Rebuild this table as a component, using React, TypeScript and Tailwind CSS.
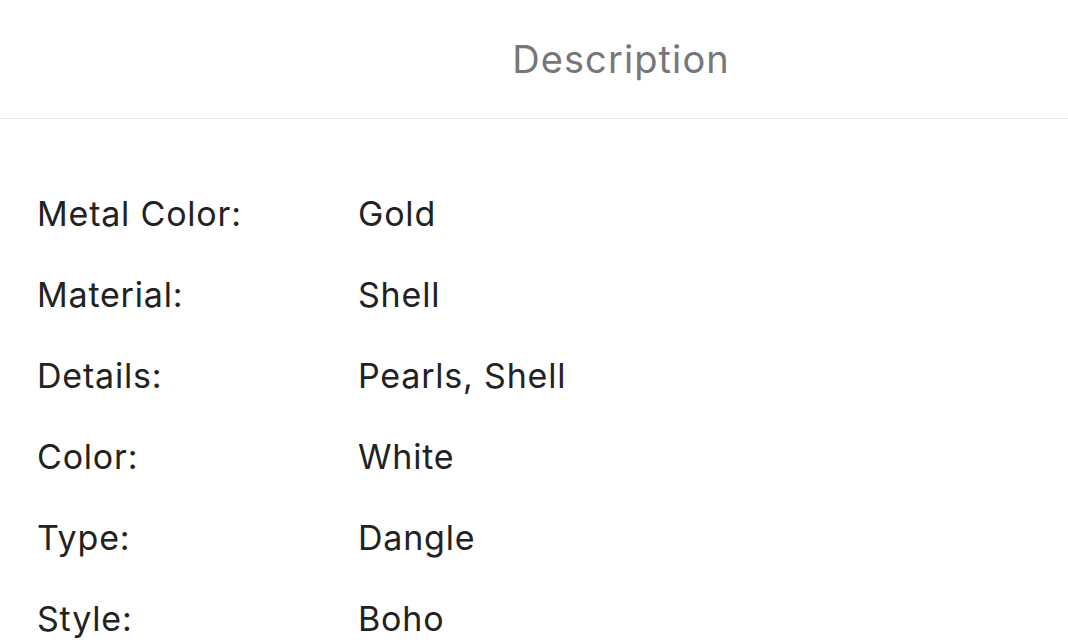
import React from 'react'

const specs: [string, string][] = [
  ['Metal Color:', 'Gold'],
  ['Material:', 'Shell'],
  ['Details:', 'Pearls, Shell'],
  ['Color:', 'White'],
  ['Type:', 'Dangle'],
  ['Style:', 'Boho'],
]

export default function App() {
  return (
    <div className="h-[644px] w-[1068px] overflow-hidden bg-white font-['Inter',sans-serif]">
      {/* Шапка */}
      <header className="flex h-[119px] items-center justify-center border-b border-[#e6e6e6] pl-[174px]">
        <h1 className="text-[38px] font-normal tracking-[1.1px] text-[#777777]">Description</h1>
      </header>

      {/* Характеристики */}
      <div className="pt-[54px] pl-[37px]">
        {specs.map(([label, value]) => (
          <div key={label} className="flex h-[81px] items-center text-[34px] tracking-[0.8px] text-[#222222]">
            <span className="w-[321px]">{label}</span>
            <span>{value}</span>
          </div>
        ))}
      </div>
    </div>
  )
}
